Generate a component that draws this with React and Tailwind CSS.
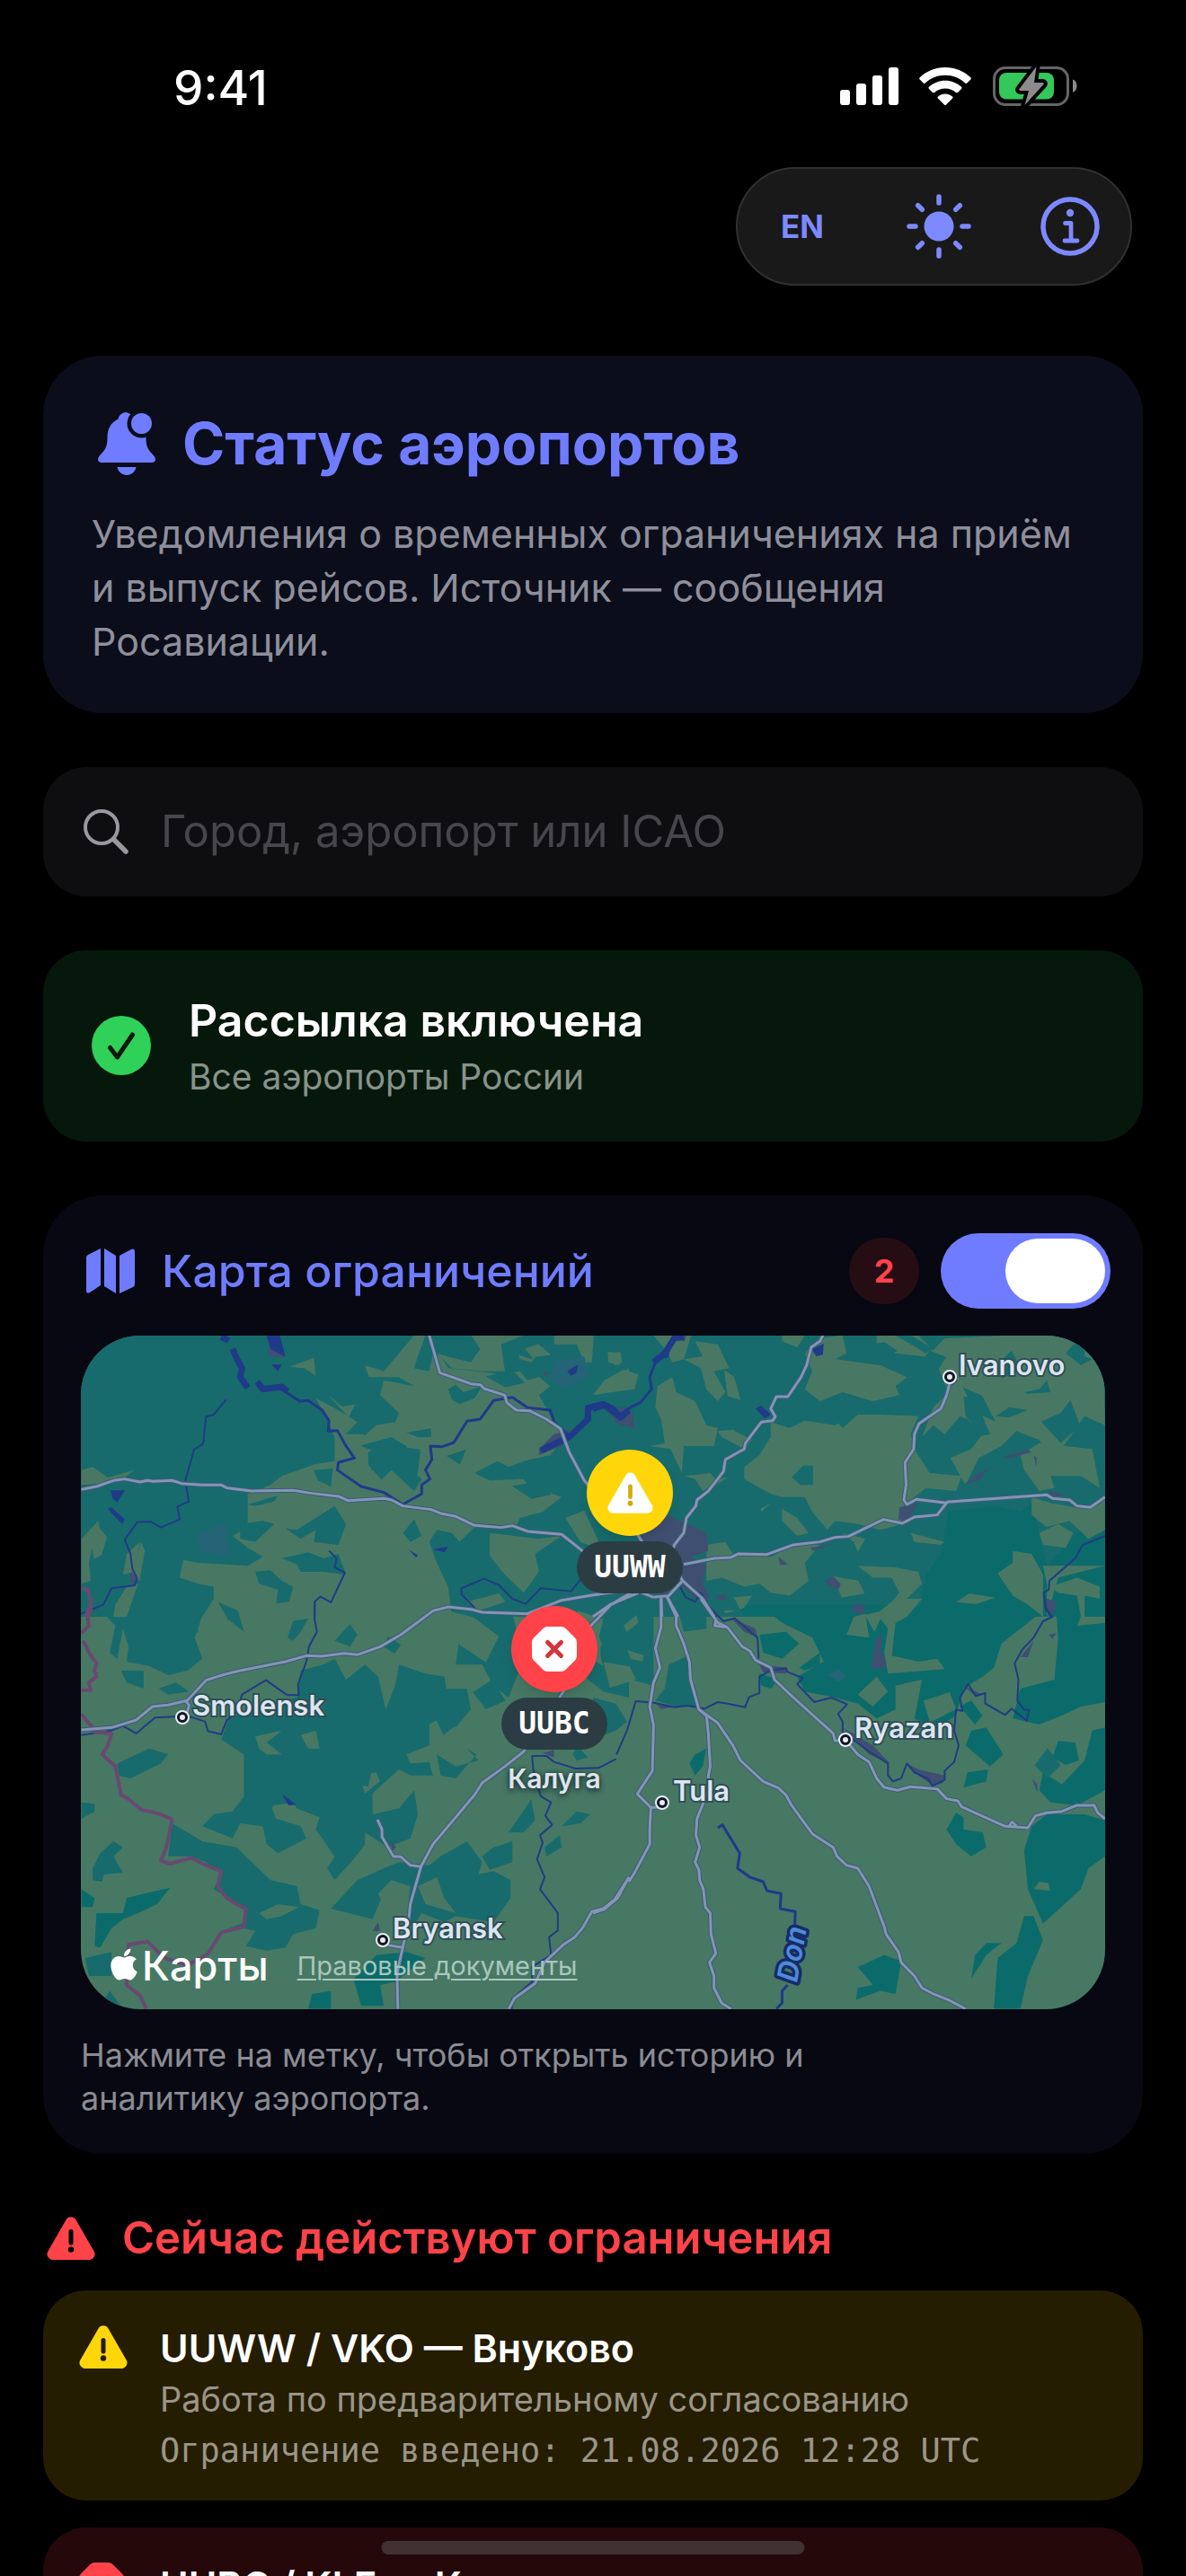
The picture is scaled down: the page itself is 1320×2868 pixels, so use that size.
import React, { useState } from "react";
import { FaApple } from "react-icons/fa";

// The map is cut into four tiles, each with its own 1568x1440 grid,
// plus one last layer of small patches that spans the whole map.
const TILES = [
  {
    at: "translate(-50 -167) scale(.4209 .3333)",
    forest: ["100,480 1600,480 1600,1440 100,1440"],
    field: [
      "1000,500 1030,500 1010,570 1000,610 1040,620 1050,560 1070,570 1090,610 1230,630 1280,620 1300,650 1330,640 1360,670 1330,700 1370,790 1400,840 1360,900 1290,920 1250,940 1220,920 1190,940 1160,960 1200,985 1290,980 1300,1000 1390,1040 1340,1090 1280,1110 1270,1140 1200,1130 1160,1140 1120,1190 1100,1160 1060,1150 1040,1190 1060,1260 1090,1340 1100,1440 440,1440 470,1380 470,1340 430,1330 380,1310 390,1250 430,1260 560,1270 600,1240 560,1210 520,1170 560,1140 560,1030 620,1000 650,970 740,930 790,920 790,840 770,780 740,710 800,750 850,790 820,830 870,830 860,870 900,890 885,950 940,950 1000,1020 1020,980 980,940 980,870 940,840 880,860 830,880 900,800 950,790 960,760 910,700 920,650 960,660 1000,670 960,640 880,640 870,600 920,620 960,560",
      "1150,500 1290,500 1230,530 1240,620 1180,620 1100,610 1060,560 1100,575 1150,590 1175,545",
      "1370,500 1475,500 1470,590 1450,590 1430,530 1370,530",
      "1275,565 1310,580 1350,530 1310,590 1280,580",
      "1510,560 1545,555 1550,590 1530,600",
      "1500,680 1540,630 1568,610 1568,670",
      "120,950 150,940 190,975 260,950 220,990 120,1000",
      "120,1180 165,1120 175,1185 150,1200 140,1260 145,1320 120,1330",
      "240,1230 275,1190 260,1290 230,1300",
      "670,605 735,575 740,635 710,610",
      "1400,1110 1450,1085 1500,1220 1440,1190",
      "1200,1160 1330,1180 1390,1170 1320,1230 1330,1290 1290,1360 1240,1300 1200,1240",
      "210,1400 240,1340 270,1330 240,1440 205,1440",
    ],
    inner: [
      "1090,680 1110,665 1130,690 1180,670 1160,710 1120,730 1100,715",
      "980,825 1045,810 1045,840 1010,840",
      "560,1065 640,1035 630,1055 580,1070",
      "735,950 785,945 780,1005 745,985",
      "580,1290 620,1285 650,1320 680,1340 670,1390 635,1395 640,1350 590,1330",
      "650,1245 720,1225 760,1245 800,1230 820,1300 760,1290 700,1290 690,1265",
      "970,1160 1000,1115 1020,1170 990,1190",
      "540,1130 600,1120 630,1130 580,1190 540,1180",
      "660,1145 690,1150 740,1110 790,1070 820,1130 800,1200 735,1190 740,1150 700,1180",
    ],
    urban: [
      "1340,620 1358,625 1350,640",
      "1370,830 1420,815 1390,870 1330,900 1330,880",
      "1510,745 1568,740 1568,800 1545,790",
      "250,1290 268,1310 262,1335 248,1320",
      "615,545 655,550 655,575 615,570",
    ],
    lake: [
      "197,1018 235,1018 215,1058 203,1045",
      "190,1080 200,1075 235,1115 228,1130",
      "622,597 650,598 640,620",
      "985,1215 1010,1235 1005,1242",
      "1050,1215 1090,1205 1080,1225",
      "1405,620 1433,598 1430,625 1415,635",
      "610,500 645,500 660,573 620,545",
    ],
    haze: ["420,1170 500,1125 510,1200 510,1240 440,1225", "1370,590 1450,570 1460,640 1400,680 1360,650"],
    river: [
      "503,715 470,765 450,772 442,862 418,882 395,985 404,1055 374,1072 380,1115 330,1142 303,1122 268,1124 235,1183 250,1230 255,1280 267,1310 262,1335 200,1345 178,1400 120,1430",
      "775,1220 795,1245 790,1275 817,1293 780,1392 752,1373 737,1390 737,1440",
      "1440,1315 1415,1355 1335,1345 1295,1397 1260,1380 1225,1335 1185,1313 1125,1345 1125,1365 1160,1410",
    ],
    wide: [
      "610,675 650,680 697,720 720,718 757,750 775,785 773,820 797,818 820,870 842,910 800,925 797,950 860,1005 920,1025 970,1065 1020,1030 1020,1000 1042,980 1030,950 1047,915 1043,870 1075,872 1105,858 1140,787 1175,780 1210,718 1260,707 1300,742 1360,750 1370,790 1410,835",
    ],
    reservoir: [
      "1335,885 1360,870 1410,840 1460,780 1460,742 1500,730 1525,745 1545,775 1568,750",
      "490,505 510,518",
      "520,545 532,580 545,610 540,640 560,675",
      "585,655 600,680 650,672 665,688",
    ],
    road: [
      "120,1015 160,1005 205,985 235,980 275,990 295,985 310,988 360,985 385,995 440,1000 490,1000 505,1010 570,1020 680,1018 730,1028 800,1038 825,1052 920,1045 940,1050 970,1070 1045,1082 1070,1095 1110,1105 1160,1135 1230,1142 1260,1136 1300,1155 1390,1165 1445,1220 1500,1290",
      "1040,500 1068,625 1150,662 1175,665 1185,678 1240,700 1245,725 1270,750 1305,752 1350,780 1387,812 1410,890 1450,985 1480,1030",
    ],
    border: ["120,1345 138,1350 145,1400 130,1440"],
  },
  {
    at: "translate(570 -167) scale(.4209 .3333)",
    forest: ["0,480 1400,480 1400,1440 0,1440"],
    east: ["940,1090 1060,1070 1130,1090 1160,1060 1200,1270 1354,1060 1360,1440 860,1440 880,1300 920,1230"],
    field: [
      "160,500 260,500 240,580 210,590 190,545",
      "270,520 330,530 360,610 320,620 350,690 330,720 300,680 285,610 240,580 290,570",
      "170,670 210,640 220,690 270,720 300,800 330,810 320,870 240,870 235,960 205,880 150,870 190,860 180,780 165,740",
      "0,700 30,650 80,615 120,630 110,680 50,690",
      "40,555 75,560 70,600 40,590",
      "330,820 370,815 420,850 400,880 340,840",
      "240,970 310,960 330,990 290,1020 270,980",
      "470,790 520,810 560,785 640,800 700,760 760,765 860,770 840,830 850,880 890,960 975,970 960,1020 880,1010 830,1060 810,1090 820,1130 760,1150 700,1130 640,1120 620,1150 580,1090 560,1040 500,1040 470,1030 400,980 400,940 440,900 470,840",
      "500,500 560,500 540,540 500,520",
      "600,510 660,500 670,560 640,580 760,600 830,640 800,670 810,700 740,720 660,690 600,720 560,680 580,620 560,560",
      "750,500 860,500 900,550 930,510 1100,500 1250,500 1310,560 1350,620 1354,800 1300,770 1250,860 1210,915 1180,850 1120,820 1080,870 1020,910 985,1000 945,910 1000,880 1030,830 990,780 970,770 930,830 900,800 870,840 900,740 940,690 910,600 870,570 800,560 750,540",
      "1130,900 1180,860 1320,880 1340,1010 1290,970 1210,970 1220,1010 1180,1020 1140,950",
      "1160,1040 1210,1060 1300,1080 1354,1050 1354,1150 1310,1180 1260,1120 1200,1140 1160,1100",
      "1180,1160 1230,1130 1270,1160 1250,1210 1190,1200",
      "1070,1295 1110,1260 1110,1220 1160,1230 1190,1300 1190,1440 1150,1400 1110,1370",
      "1190,1270 1354,1270 1290,1290 1230,1310 1200,1440 1200,1330",
      "1210,1340 1280,1310 1340,1340 1340,1380 1300,1370 1300,1440 1290,1440 1280,1370 1230,1360",
      "300,1200 350,1190 370,1230 470,1240 530,1200 600,1200 560,1260 570,1320 520,1370 470,1360 440,1330 400,1340 340,1310 300,1320",
      "400,1110 470,1060 430,1110 430,1140 405,1130",
      "500,1080 540,1110 570,1160 540,1170 500,1120",
      "330,1380 420,1370 400,1410 350,1430",
      "700,1270 800,1275 860,1290 870,1330 830,1380 820,1440 760,1440 810,1360 790,1310 740,1310",
      "660,1160 720,1180 700,1225 690,1190",
      "840,1160 930,1190 920,1200 850,1190",
    ],
    inner: [
      "525,975 555,935 582,935 582,1000 550,1000",
      "1140,690 1180,680 1200,650 1210,690 1150,695",
      "1065,770 1100,740 1150,750 1100,775",
      "980,705 1025,710 1030,770 1050,830 1010,840 1000,790 985,770",
      "1270,530 1300,520 1300,570 1320,580 1290,600 1250,560",
      "800,500 840,500 900,545 880,560",
      "640,780 690,740 780,745 780,765 700,765 660,810",
    ],
    urban: [
      "200,1100 250,1130 300,1160 305,1220 260,1240 300,1270 290,1330 310,1380 270,1380 240,1340 180,1370 130,1300 120,1180",
      "810,1075 860,1060 830,1120 808,1115",
      "490,1240 515,1265 495,1268",
      "615,1320 635,1305 655,1330 650,1348 625,1340",
      "685,1405 710,1398 720,1415 715,1430 690,1430",
      "35,750 105,760 110,812 65,795",
      "575,1210 640,1195 580,1220",
      "980,1000 1010,970 1045,945 1020,985",
      "1085,905 1150,883 1160,890 1095,912",
      "1165,900 1173,910 1173,940",
      "1205,1018 1250,1033 1210,1040",
      "940,630 965,650 950,670",
      "215,500 248,500 240,522",
      "325,1370 350,1365 350,1385 325,1382",
      "1200,1380 1225,1390 1215,1440 1200,1420",
    ],
    lake: ["430,745 445,735 470,765 455,778", "578,545 610,528 608,565 590,570", "180,575 205,530 200,575"],
    river: [
      "1354,1170 1295,1200 1275,1245 1207,1320 1205,1350 1192,1360 1197,1410 1213,1440",
      "230,1340 245,1375 270,1390 285,1360 325,1440",
    ],
    wide: ["65,772 100,740 125,725 155,680 150,640 165,590"],
    reservoir: ["0,745 30,733 70,770", "160,590 190,560 205,530 215,510 240,505"],
    road: [
      "160,1375 200,1370 237,1320 290,1380 320,1440",
      "180,1375 182,1440",
      "195,1372 225,1440",
      "237,1320 205,1250 215,1200 240,1160 247,1110 272,1070 275,1050 305,1020 345,955 350,915 400,880 403,860 445,790 475,785 482,772 470,745 485,705 515,705 550,640 565,600 577,540 600,520 608,500",
      "240,1265 320,1245 365,1242 385,1230 460,1232 530,1200 600,1190 640,1175 675,1172 768,1115 818,1128 850,1107 910,1100 935,1060 855,1048 830,1065 822,1050 828,1000 825,925 848,880 850,830 862,795 920,745 935,700 943,660",
      "935,1057 1200,1033 1215,1045 1260,1050 1280,1070 1315,1075 1354,1040",
      "0,1367 110,1350 160,1375",
      "0,1440 45,1400 120,1360",
      "115,1160 135,1200",
    ],
  },
  {
    at: "translate(-50 293) scale(.4209 .3333)",
    forest: [
      "180,50 300,50 440,55 420,130 440,200 400,240 350,255 300,225 240,210 245,160 230,100 215,200 195,180 210,90",
      "700,240 760,220 790,200 820,270 870,220 905,260 925,370 950,290 960,220 1030,250 1080,260 1085,300 1140,300 1150,370 1110,430 1080,390 1040,420 1040,490 980,520 990,550 1040,545 1050,590 990,590 960,570 890,650 890,720 960,700 1000,640 1010,720 990,800 930,830 870,780 870,820 840,870 790,940 770,900 790,860 740,770 750,730 690,700 680,680 630,690 600,720 700,760 715,800 640,850 610,820 600,760 540,750 520,800 440,760 470,720 520,710 550,660 550,520 490,470 510,400 600,350 690,330",
      "665,130 680,75 720,65 700,110 680,140",
      "790,140 830,85 850,120 830,160",
      "1110,60 1200,60 1260,50 1290,200 1250,330 1210,290 1180,220 1110,220 1120,130",
      "1480,60 1600,40 1600,260 1520,230 1490,130",
      "1440,250 1480,200 1568,270 1568,330 1500,310",
      "215,550 300,500 350,520 330,550 250,600 220,590",
      "225,240 285,240 285,300 240,280",
      "325,300 370,280 405,310 350,320",
      "360,750 440,810 530,830 620,940 690,960 700,1020 750,1040 740,1100 680,1120 660,1165 610,1175 555,1160 580,1110 550,1100 490,1110 555,1080 550,1030 470,970 490,920 450,880 410,860 350,860",
      "780,1035 850,940 920,900 960,880 1040,890 1070,860 1140,810 1180,880 1170,920 1210,910 1255,940 1255,1000 1210,1080 1110,1060 1080,1080 1020,1050 1000,1090 940,1050 920,980 890,1070",
      "150,900 170,850 205,810 230,830 205,860 230,915 180,920 175,945 150,940",
      "1250,780 1310,670 1320,740 1290,780",
      "1390,760 1430,710 1465,720 1440,750",
      "1345,830 1385,790 1390,830 1350,860",
      "1180,860 1210,830 1260,810 1260,880 1200,905",
      "120,680 155,685 155,710 120,735",
      "1430,490 1460,530 1430,540 1420,520",
      "1060,520 1110,560 1170,540 1140,500 1165,520 1110,600 1070,590",
      "130,1200 200,1180 200,1260 140,1260",
      "175,1350 195,1310 230,1370",
    ],
    east: [
      "160,1050 230,1050 240,1000 300,980 355,965 320,1020 270,1050 230,1070 200,1100 170,1165 155,1160",
      "840,1270 900,1190 980,1180 1030,1200 950,1280 910,1290 920,1360 860,1360",
      "730,1320 780,1310 780,1370 720,1370",
      "120,970 155,1000 150,1030 120,1030",
    ],
    field: [
      "855,590 900,580 910,610 870,650",
      "580,460 650,440 610,480 650,520 610,520 590,500",
      "700,455 740,440 750,500 720,500",
      "905,985 940,940 990,960 980,1070 930,1050",
      "1010,960 1060,930 1080,1000 1110,1050 1030,1020",
      "590,1050 640,1020 695,1030 650,1060 610,1070",
    ],
    urban: ["1340,515 1370,505 1370,530", "890,1110 905,1080 910,1110", "940,810 953,830 940,845"],
    lake: ["650,652 688,688 668,690"],
    river: [
      "120,455 200,440 230,425 265,450 315,397 375,393 410,395 447,410 455,442 490,453 505,405 530,380 545,320 608,272 665,322 695,322 693,285 715,210 722,160 743,110 737,70 737,10",
      "1534,535 1488,565 1427,567 1370,545 1350,525 1312,525 1315,570 1335,660 1362,680 1347,725 1365,755 1333,790 1340,815 1325,870 1345,930 1333,970 1380,1050 1380,1108 1357,1130 1362,1190 1312,1230 1312,1280 1260,1335 1258,1370",
    ],
    road: [
      "120,438 200,430 265,405 308,360 350,355 400,340 450,272 500,252 540,240 660,210 715,190 755,192 815,182 850,187 910,160 965,120 1050,40 1090,27 1150,35 1180,45 1300,50 1390,5 1500,-18",
      "1600,-40 1520,20 1460,100 1400,300 1290,510 1240,560 1180,615 1160,655 1130,700 1050,820 1018,895 990,1020 985,1080 970,1165 955,1250 957,1370",
      "395,340 405,355 400,380",
      "903,738 915,770 915,795 945,860 965,862 990,890 1018,895",
      "930,1157 970,1165",
      "1250,1370 1265,1335 1320,1285 1345,1215 1395,1155 1425,1130 1445,1100 1470,1045 1500,1035 1530,1005 1568,930",
    ],
    border: [
      "145,0 145,40 137,60 140,90 120,115",
      "125,140 145,190 160,215 155,240 160,260 140,280 145,305 120,305",
      "120,385 150,430 155,445 200,450 190,490 175,520 210,560 225,655 240,665 280,705 300,710 330,720 360,737 350,800 345,830 330,875 355,885 410,865 440,885 490,910 480,960 505,1000 530,1020 555,1035 550,1095 520,1105 490,1115 455,1185 400,1225 340,1200 295,1145 245,1155 240,1290 275,1325 292,1370",
    ],
  },
  {
    at: "translate(570 293) scale(.4209 .3333)",
    forest: [
      "20,160 50,120 60,60 110,50 160,60 160,290 100,270 20,260",
      "190,300 200,220 250,190 260,300 280,360 220,360 165,340",
      "0,330 60,350 90,410 60,440 0,470",
      "230,60 300,60 300,100 240,110",
    ],
    east: [
      "380,20 1190,20 1180,50 1080,150 1060,230 1030,260 980,300 960,390 900,440 850,400 870,270 800,290 800,370 750,400 700,350 640,330 560,310 540,260 610,210 580,130 500,80 480,60 400,60",
      "1225,40 1290,60 1280,90 1354,80 1354,345 1290,360 1240,390 1180,420 1110,400 1130,300 1220,270 1230,130",
      "1354,460 1354,640 1280,690 1210,680 1180,640 1190,580 1240,620 1300,540 1320,440 1354,430",
      "985,490 1000,440 1040,430 1085,520 1050,560",
      "980,630 990,580 1045,570 1040,610",
      "970,360 1000,340 1030,390 1010,420",
      "1215,530 1230,475 1275,480 1285,540 1250,555",
      "1140,840 1160,760 1200,720 1300,720 1354,740 1354,860 1310,900 1290,970 1190,1085 1150,970",
      "1060,1370 1070,1200 1120,1150 1140,1060 1165,1060 1190,1140 1150,1260 1130,1370",
      "1000,1270 1010,1190 1040,1150 1080,1150 1040,1190",
      "935,770 960,715 980,730 980,770 1030,780 1040,830 1000,860 960,820",
      "700,1230 770,1190 815,1210 800,1320 760,1310 695,1340 700,1300 740,1290",
      "255,550 270,520 300,500 290,560 270,590",
      "440,120 510,110 545,150 500,200 450,180",
      "440,250 490,270 470,300 445,290",
      "545,230 600,180 600,220 560,240",
    ],
    field: [
      "1165,970 1180,945 1205,950 1208,975",
      "670,120 690,60 720,50 730,130",
      "750,50 800,0 870,0 830,60 800,80 790,190 860,210 910,200 930,235 780,250 770,180 780,100",
      "700,320 750,260 780,310 740,360",
      "80,90 115,55 120,80 90,110",
      "90,170 135,190 130,210 100,200",
    ],
    urban: [
      "365,65 430,100 435,130 400,110",
      "440,220 515,230 510,250 450,245",
      "735,230 750,130 765,120 760,170 775,210 770,235",
      "685,25 705,18 720,35 695,48",
      "830,550 860,570 930,590 925,615 900,625 860,590 840,570",
      "660,430 740,490 785,550 730,520",
      "980,290 1030,320 1010,325",
      "1130,195 1165,140 1150,195",
      "170,355 220,360 180,368",
      "1160,600 1175,620 1175,645",
      "1205,120 1225,115 1215,135",
      "1200,0 1225,10 1215,60 1195,40",
    ],
    haze: ["620,255 650,235 670,260 650,278"],
    river: [
      "1195,0 1197,35 1215,60 1190,75 1165,130 1135,170 1115,215 1125,270 1122,340 1140,370 1153,372 1147,408 1107,367 1090,388 1037,350 1037,315 1012,325 992,285 970,330 977,375 960,370 955,440 967,490 955,545 930,575 930,605 897,625 885,600 850,580 830,550 815,600 793,610 780,590 780,550 730,510 660,445 660,410 648,385 672,352 630,330 585,345 540,285 555,265 515,245 510,232 470,240 440,260 440,315 413,328 402,362 355,350 330,345 295,367 250,357 215,362 160,347 113,342 90,440 62,520",
      "285,0 345,75 375,65 435,130 438,200",
    ],
    wide: [
      "330,765 342,755 388,850 382,900 415,930 450,945 460,975 497,985 495,1035 535,1045 533,1110",
      "515,1290 500,1310 500,1350 485,1370",
    ],
    road: [
      "95,930 65,1000 30,1037 0,1050",
      "95,945 110,915 150,820 150,770 153,697 117,652 157,575 160,420 150,360 160,280 177,230 165,165 180,95 180,0",
      "153,697 183,697",
      "195,-10 220,60 220,90 240,150 255,210 258,270 280,370 300,390 305,450 310,560 305,590 305,640 275,735 272,790 282,830 270,880 280,905 282,940 292,970 297,1030 310,1050 312,1120 325,1185 308,1215 320,1260 320,1300 340,1350 365,1370",
      "280,370 330,415 370,490 390,540 450,610 490,632 510,655 525,690 580,785 635,830 645,860 670,890 700,900 730,960 770,1095 775,1120 808,1180 815,1215 850,1260 870,1300 900,1320 940,1340 985,1370",
      "285,0 330,80 355,95 395,160 415,175 430,205 470,230 480,270 530,330 635,450 640,475 667,470 700,520 730,545 750,600 770,630 805,640 840,628 910,635 935,668 965,675 975,695 1090,760 1150,765 1170,725 1200,715 1240,710 1280,690 1325,690 1335,715 1354,735",
      "325,70 322,90 355,95",
      "1100,760 1108,745 1120,760",
    ],
  },
  {
    at: "scale(.727 .4783)",
    field: [
      "15,480 30,450 40,470 32,510 20,520",
      "78,560 92,480 98,500 90,570",
      "380,140 400,165 420,160 410,190",
      "560,640 600,655 640,700 620,760 580,720",
      "760,640 800,660 790,720 800,770 770,740",
      "800,760 840,770 850,800 810,820",
      "985,80 1000,95 1010,150 990,140",
      "950,340 990,330 970,350",
      "1200,650 1230,640 1215,690",
      "1290,850 1330,830 1340,870 1300,900",
      "1340,620 1360,600 1400,610 1370,625",
      "1150,560 1190,570 1200,600 1165,610",
      "680,30 700,20 720,45 690,50",
      "590,620 640,600 650,620 610,640",
    ],
    inner: [
      "440,270 470,255 520,265 515,330 485,300 460,335 440,300",
      "1185,25 1230,15 1250,35 1225,55",
      "1280,70 1300,35 1325,50 1310,85",
      "1400,70 1425,35 1440,80 1410,100",
      "1470,200 1500,180 1515,150 1530,210 1500,250",
      "1060,130 1100,120 1130,150 1100,160 1075,175",
      "1350,120 1380,140 1400,200 1370,180",
      "1395,270 1430,290 1400,350 1375,320",
      "560,280 590,265 580,300",
      "660,350 700,340 720,370 690,380",
      "620,95 660,80 680,110 650,120",
      "210,620 240,640 250,690 225,660",
      "100,640 170,600 180,690 120,720 90,690",
      "470,700 490,720 480,740 465,725",
      "600,830 630,800 650,850 620,870",
      "540,880 570,860 580,900 555,930",
      "590,520 620,500 640,540 600,560",
      "1010,420 1040,400 1050,450 1020,470",
      "960,600 1000,610 1010,640 970,640",
      "420,1000 450,980 440,1050 410,1040",
      "250,1080 290,1090 300,1130 270,1110",
      "1460,1000 1480,960 1500,1000 1480,1030",
    ],
  },
];

const AREAS = [
  ["forest", "#176b6c"],
  ["east", "#0b6b6a"],
  ["field", "#487864"],
  ["inner", "#176b6c"],
  ["haze", "#256477"],
  ["urban", "#3f4f71"],
  ["lake", "#1f3a88"],
];

const LINES = [
  ["river", "#1f3c84", 2],
  ["wide", "#1f3a88", 3],
  ["reservoir", "#1f3a88", 7],
  ["border", "#69496f", 4],
  ["road", "#3d5a76", 5],
  ["road", "#8296b4", 3],
];

const CITIES = [
  { name: "Ivanovo", x: 977, y: 44, dx: 967, dy: 46 },
  { name: "Smolensk", x: 124, y: 423, dx: 113, dy: 425 },
  { name: "Ryazan", x: 861, y: 448, dx: 851, dy: 450 },
  { name: "Tula", x: 659, y: 518, dx: 647, dy: 520 },
  { name: "Bryansk", x: 347, y: 671, dx: 336, dy: 673 },
];

const Terrain = () => (
  <svg className="block h-[750px] w-full" viewBox="0 0 1140 750" preserveAspectRatio="xMidYMid slice">
    <rect width="1140" height="750" fill="#477864" />
    {AREAS.map(([kind, fill]) =>
      TILES.map((tile) => (
        <g key={kind + tile.at} transform={tile.at} fill={fill}>
          {(tile[kind] || []).map((points) => (
            <polygon key={points} points={points} />
          ))}
        </g>
      ))
    )}
    {LINES.map(([kind, stroke, width], i) =>
      TILES.map((tile) => (
        <g
          key={i + tile.at}
          transform={tile.at}
          fill="none"
          stroke={stroke}
          strokeWidth={width}
          strokeLinejoin="round"
        >
          {(tile[kind] || []).map((points) => (
            <polyline key={points} points={points} vectorEffect="non-scaling-stroke" />
          ))}
        </g>
      ))
    )}
    {CITIES.map((c) => (
      <g key={c.name}>
        <circle cx={c.dx} cy={c.dy} r="5" fill="#e8ecf4" stroke="#12161f" strokeWidth="4" />
        <circle cx={c.dx} cy={c.dy} r="7" fill="none" stroke="#e8ecf4" strokeWidth="2" />
        <text
          x={c.x}
          y={c.y}
          className="text-[31px] font-semibold"
          fill="#dde5f1"
          stroke="#2f4f56"
          strokeWidth="4"
          paintOrder="stroke"
        >
          {c.name}
        </text>
      </g>
    ))}
    <text
      transform="translate(797 721) rotate(-80)"
      className="text-[32px] font-semibold italic"
      fill="#4f8ad6"
      stroke="#152c66"
      strokeWidth="7"
      strokeLinejoin="round"
      paintOrder="stroke"
    >
      Don
    </text>
  </svg>
);

const WarningIcon = ({ className, mark }) => (
  <svg className={className} viewBox="0 0 54 48">
    <path
      d="M21.500 3.500a6.300 6.300 0 0 1 11 0L52.600 38.500a6.300 6.300 0 0 1-5.500 9.500H6.900a6.300 6.300 0 0 1-5.500-9.500z"
      fill="currentColor"
    />
    <path d="M27 16.500v12.500" stroke={mark} strokeWidth="5" strokeLinecap="round" />
    <circle cx="27" cy="36.500" r="3.200" fill={mark} />
  </svg>
);

const StopIcon = ({ className, mark }) => (
  <svg className={className} viewBox="0 0 50 50">
    <path
      d="M17.500 0h15q3 0 5 2L48 12.500q2 2 2 5v15q0 3-2 5L37.500 48q-2 2-5 2h-15q-3 0-5-2L2 37.500q-2-2-2-5v-15q0-3 2-5L12.500 2q2-2 5-2z"
      fill="currentColor"
    />
    <path d="M17.500 17.500l15 15m0-15l-15 15" stroke={mark} strokeWidth="5" strokeLinecap="round" />
  </svg>
);

const BellIcon = () => (
  <svg className="h-[70px] w-16 shrink-0" viewBox="0 0 64 70">
    <path
      d="M32 0c-5 0-8.500 3-9.500 7.500C14 11.500 10.500 19 10.500 28c0 9-1.500 13-7 18.500C1.500 48.500 0 50.500 0 52.500 0 54.700 1.700 56 4 56h56c2.300 0 4-1.300 4-3.500 0-2-1.500-4-3.500-6C55 41 53.500 37 53.500 28L50 12 38 3z"
      fill="#6f7cff"
    />
    <path d="M21.500 61h21c-1 5.500-5.500 9-10.500 9s-9.500-3.500-10.500-9z" fill="#6f7cff" />
    <circle cx="48.500" cy="12.500" r="16" fill="#0b0d1a" />
    <circle cx="48.500" cy="12.500" r="11.500" fill="#6f7cff" />
  </svg>
);

const StatusBar = () => (
  <div className="flex h-[60px] items-center justify-between pr-[121px] pl-[193px]">
    <time className="mt-1 text-[53px] leading-[60px] font-medium">9:41</time>
    <div className="flex items-center gap-[23px]">
      <svg className="h-[42px] w-[65px]" viewBox="0 0 65 42" fill="#fff">
        <rect y="25" width="11" height="17" rx="3" />
        <rect x="18" y="18" width="11" height="24" rx="3" />
        <rect x="36" y="9" width="11" height="33" rx="3" />
        <rect x="54" width="11" height="42" rx="3" />
      </svg>
      <svg className="h-[42px] w-[58px]" viewBox="0 0 58 42" fill="#fff">
        <path d="M29 0C18 0 8 4.300.7 11.300c-.7.700-.7 1.500 0 2.200l4 4c.6.600 1.500.600 2.100 0C12.700 12 20.500 8.800 29 8.800s16.300 3.200 22.200 8.700c.6.600 1.500.600 2.100 0l4-4c.7-.7.7-1.500 0-2.200C50 4.300 40 0 29 0z" />
        <path d="M29 14.800c-7 0-13.300 2.700-18 7-.7.600-.7 1.500 0 2.100l4 4c.6.600 1.400.600 2.100.1 3.200-2.800 7.300-4.500 11.900-4.500s8.700 1.700 11.900 4.500c.7.500 1.500.500 2.100-.1l4-4c.7-.6.7-1.500 0-2.100-4.700-4.300-11-7-18-7z" />
        <path d="M29 29.500c-3 0-5.800 1.100-8 2.900-.7.600-.7 1.400-.1 2l7 7c.7.700 1.500.700 2.200 0l7-7c.6-.6.6-1.400-.1-2-2.200-1.800-5-2.900-8-2.900z" />
      </svg>
      <svg className="h-[46px] w-[95px]" viewBox="0 0 95 46">
        <rect x="2.500" y="2.500" width="82" height="41" rx="12.500" fill="none" stroke="#666" strokeWidth="3" />
        <rect x="8" y="8" width="61" height="29.500" rx="8" fill="#34c759" />
        <path d="M90 15.500c3 1 4.500 4 4.500 7.300S93 29 90 30z" fill="#8a8a8a" />
        <path
          d="M49.500 1 30.500 26a1.200 1.200 0 0 0 1 2H41l-4.500 16L57.500 21a1.200 1.200 0 0 0-1-2H47z"
          fill="#8c8c8c"
          stroke="#000"
          strokeWidth="8"
          strokeLinejoin="round"
          paintOrder="stroke"
        />
      </svg>
    </div>
  </div>
);

const Toolbar = () => (
  <nav className="mt-[60px] mr-[60px] ml-auto flex h-[132px] w-[441px] items-center justify-between rounded-full border-2 border-[#303032] bg-[#191919] pr-[34px] pl-12 text-[#7d89ff]">
    <button className="text-[35px] leading-[48px] font-bold">EN</button>
    <button aria-label="Светлая тема" className="ml-4">
      <svg className="size-[72px]" viewBox="0 0 72 72" stroke="currentColor" strokeWidth="5.500" strokeLinecap="round">
        <circle cx="36" cy="36" r="16.500" fill="currentColor" stroke="none" />
        <path d="M36 3v7M36 62v7M3 36h7M62 36h7M12.700 12.700l4.600 4.600M54.700 54.700l4.600 4.600M12.700 59.300l4.600-4.600M54.700 17.300l4.600-4.600" />
      </svg>
    </button>
    <button aria-label="О приложении">
      <svg className="size-[66px]" viewBox="0 0 66 66" fill="none" stroke="currentColor" strokeLinecap="round">
        <circle cx="33" cy="33" r="30" strokeWidth="5.500" />
        <circle cx="33" cy="18" r="4.200" fill="currentColor" stroke="none" />
        <path d="M27.500 29.500h6.500v19M27 49h14" strokeWidth="4.800" strokeLinejoin="round" />
      </svg>
    </button>
  </nav>
);

const AirportPin = ({ code, city, place, color, children }) => (
  <button className={`absolute flex w-[118px] flex-col items-center ${place}`}>
    <span className={`flex size-24 items-center justify-center rounded-full shadow-lg ${color}`}>{children}</span>
    <span className="mt-1.5 flex h-[58px] w-full items-center justify-center rounded-full bg-[#2b3d42] font-['DejaVu_Sans_Mono',monospace] text-[33px] font-bold">
      {code}
    </span>
    {city && (
      <span className="mt-3.5 text-[30px] leading-9 font-semibold text-[#dde5ea] [text-shadow:0_0_5px_#22363c,0_3px_6px_#22363c]">
        {city}
      </span>
    )}
  </button>
);

const MapCard = () => {
  const [on, setOn] = useState(true);

  return (
    <section className="rounded-[66px] bg-[#070811] px-[42px] pt-[42px] pb-[38px]">
      <div className="flex h-[84px] items-center">
        <svg className="ml-1.5 h-[50px] w-[54px]" viewBox="0 0 54 50" fill="#6f7cff">
          <path d="M16 0v41L4 49q-4 2-4-2V10q0-2 2-3z" />
          <path d="M20 0l13 8v42l-13-8z" />
          <path d="M37 8L50 1q4-1.500 4 2.500V40q0 2-2 3l-15 7z" />
        </svg>
        <h2 className="ml-[30px] text-[50px] leading-[60px] font-medium text-[#6f7cff]">Карта ограничений</h2>
        <span className="mr-6 ml-auto flex h-[74px] w-[78px] items-center justify-center rounded-full bg-[#260d14] text-[36px] font-bold text-[#ff4348]">
          2
        </span>
        <label className="relative -mr-1.5 block h-[84px] w-[189px]">
          <input
            type="checkbox"
            role="switch"
            aria-label="Карта ограничений"
            className="peer sr-only"
            checked={on}
            onChange={() => setOn(!on)}
          />
          <span className="block h-full rounded-full bg-[#39393d] peer-checked:bg-[#6f7cff]"></span>
          <span className="absolute top-1.5 left-1.5 h-[72px] w-[111px] rounded-full bg-white peer-checked:right-1.5 peer-checked:left-auto"></span>
        </label>
      </div>

      <div className="relative mt-[30px] overflow-hidden rounded-[66px]">
        <Terrain />
        <AirportPin code="UUWW" place="top-[127px] left-[552px]" color="bg-[#ffd60a]">
          <WarningIcon className="h-[46px] w-[51px]" mark="#d6ab08" />
        </AirportPin>
        <AirportPin code="UUBC" city="Калуга" place="top-[301px] left-[468px]" color="bg-[#ff4348]">
          <StopIcon className="size-[50px]" mark="#d2353c" />
        </AirportPin>
        <div className="absolute bottom-[21px] left-7 flex items-center">
          <FaApple className="-mt-1 size-10" />
          <span className="text-[45px] leading-[54px] font-medium">Карты</span>
          <a
            href="#legal"
            className="ml-8 text-[29px] leading-9 text-[#a9c6bd] underline decoration-2 underline-offset-4"
          >
            Правовые документы
          </a>
        </div>
      </div>

      <p className="mt-[27px] max-w-[880px] text-[36px] leading-[48px] text-[#8b8b93]">
        Нажмите на метку, чтобы открыть историю и аналитику аэропорта.
      </p>
    </section>
  );
};

const AlertCard = ({ title, text, since, color, children }) => (
  <article className={`flex rounded-[48px] px-10 pt-[33px] pb-[31px] ${color}`}>
    <div className="mt-1.5 w-[54px] shrink-0">{children}</div>
    <div className="ml-9">
      <h3 className="text-[43px] leading-[63px] font-semibold">{title}</h3>
      <p className="text-[38px] leading-[51px] text-[#9a9588]">{text}</p>
      <p className="mt-2 font-['DejaVu_Sans_Mono',monospace] text-[37px] leading-[48px] text-[#9a9588]">{since}</p>
    </div>
  </article>
);

export default function App() {
  return (
    <div className="relative h-screen overflow-hidden bg-black pt-[66px] font-['Inter',sans-serif] text-white">
      <StatusBar />
      <Toolbar />

      <main className="mt-[78px] flex flex-col gap-[60px] px-12">
        <header className="rounded-[66px] bg-[#0b0d1a] px-[54px] pt-14 pb-[50px]">
          <div className="flex h-[84px] items-center gap-[30px] pl-[7px]">
            <BellIcon />
            <h1 className="text-[64px] leading-[84px] font-bold text-[#6f7cff]">Статус аэропортов</h1>
          </div>
          <p className="mt-7 text-[43px] leading-[60px] text-[#8f8f9c]">
            Уведомления о временных ограничениях на приём и выпуск рейсов. Источник — сообщения Росавиации.
          </p>
        </header>

        <label className="flex h-[144px] items-center gap-9 rounded-[48px] bg-[#0e0e10] px-[45px]">
          <svg className="size-[50px] shrink-0" viewBox="0 0 50 50" fill="none" stroke="#98989f" strokeLinecap="round">
            <circle cx="20" cy="20" r="18" strokeWidth="4" />
            <path d="M33.500 33.500l13.500 13.500" strokeWidth="5.500" />
          </svg>
          <input
            type="search"
            aria-label="Поиск"
            placeholder="Город, аэропорт или ICAO"
            className="w-full bg-transparent text-[49px] leading-[66px] outline-none placeholder:text-[#47474b]"
          />
        </label>

        <section className="flex items-center rounded-[48px] bg-[#06180b] px-[54px] pt-[45px] pb-[47px]">
          <svg className="size-[66px] shrink-0" viewBox="0 0 66 66" fill="none">
            <circle cx="33" cy="33" r="33" fill="#30d158" />
            <path
              d="M20.500 35.500l8 10.500 17-25"
              stroke="#06180b"
              strokeWidth="5"
              strokeLinecap="round"
              strokeLinejoin="round"
            />
          </svg>
          <div className="ml-[42px]">
            <h2 className="text-[50px] leading-[66px] font-semibold">Рассылка включена</h2>
            <p className="mt-1 text-[39px] leading-[51px] text-[#87938a]">Все аэропорты России</p>
          </div>
        </section>

        <MapCard />

        <section>
          <h2 className="flex items-center gap-[30px] pt-1 pl-1 text-[49px] leading-[60px] font-semibold text-[#ff4348]">
            <WarningIcon className="h-12 w-[54px]" mark="#000" />
            Сейчас действуют ограничения
          </h2>
          <div className="mt-7 flex flex-col gap-[30px]">
            <AlertCard
              title="UUWW / VKO — Внуково"
              text="Работа по предварительному согласованию"
              since="Ограничение введено: 21.08.2026 12:28 UTC"
              color="bg-[#241d02]"
            >
              <WarningIcon className="h-12 w-[54px] text-[#ffd60a]" mark="#241d02" />
            </AlertCard>
            <AlertCard
              title="UUBC / KLF — Калуга"
              text="Приём и выпуск рейсов ограничены"
              since="Ограничение введено: 21.08.2026 12:28 UTC"
              color="bg-[#24080a]"
            >
              <StopIcon className="size-[50px] text-[#ff4348]" mark="#24080a" />
            </AlertCard>
          </div>
        </section>
      </main>

      <div className="absolute bottom-6 left-1/2 h-[15px] w-[471px] -translate-x-1/2 rounded-full bg-[#403133]"></div>
    </div>
  );
}
